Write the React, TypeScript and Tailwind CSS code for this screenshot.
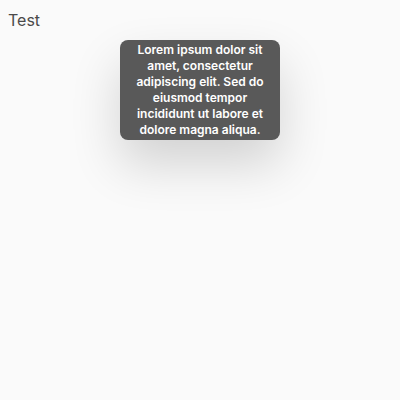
export default function App() {
  return (
    <div
      className="relative min-h-[400px] w-full bg-[#fafafa] text-[#333]"
      style={{ fontFamily: "Inter, 'Noto Sans', sans-serif" }}
    >
      <div className="px-2 pt-[10px] text-base leading-5 text-[#4a4a4a]">Test</div>

      <div className="absolute left-[120px] top-[40px] w-[160px] rounded-lg bg-[#595959] px-2 py-0.5 text-center text-xs font-semibold leading-4 text-white shadow-[0_24px_50px_0_rgba(0,0,0,0.16)]">
        Lorem ipsum dolor sit amet, consectetur adipiscing elit. Sed do eiusmod
        tempor incididunt ut labore et dolore magna aliqua.
      </div>
    </div>
  );
}
